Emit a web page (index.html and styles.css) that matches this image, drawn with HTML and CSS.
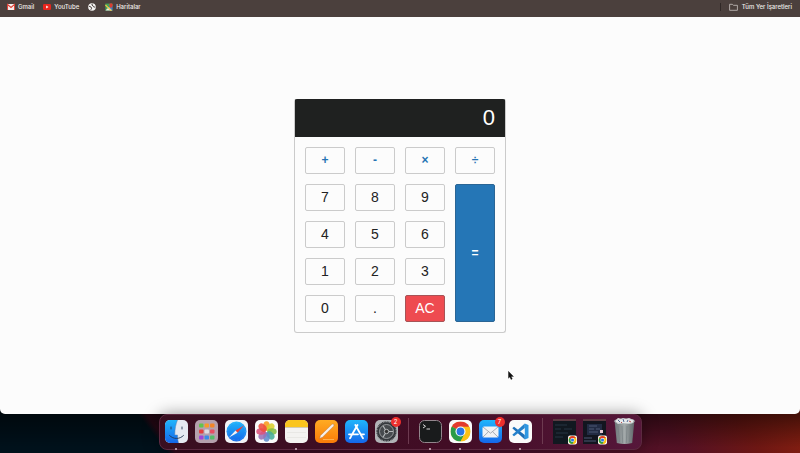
FILE: index.html
```html
<!DOCTYPE html>
<html lang="tr">
<head>
<meta charset="utf-8">
<title>Hesap Makinesi</title>
<link rel="stylesheet" href="styles.css">
</head>
<body>
<svg class="defs" aria-hidden="true">
  <defs>
    <linearGradient id="blue" x2="0" y2="1"><stop stop-color="#20b5fb"/><stop offset="1" stop-color="#1467ea"/></linearGradient>
    <linearGradient id="orange" x2="0" y2="1"><stop stop-color="#ffab23"/><stop offset="1" stop-color="#f97b08"/></linearGradient>
    <linearGradient id="metal"><stop stop-color="#6c7477"/><stop offset=".5" stop-color="#a3a9aa"/><stop offset="1" stop-color="#5e6568"/></linearGradient>
    <symbol id="chrome" viewBox="0 0 20 20">
      <circle cx="10" cy="10" r="10" fill="#fbc116"/>
      <path d="M10 10 1.34 5A10 10 0 0 1 18.66 5z" fill="#e33b2e"/>
      <path d="M10 10 1.34 5A10 10 0 0 0 10 20l4-7z" fill="#2a9c48"/>
      <path d="M10 5.3h8.8A10 10 0 0 1 10 20l4-7.500z" fill="#fbc116"/>
      <circle cx="10" cy="10" r="5" fill="#fff"/><circle cx="10" cy="10" r="3.900" fill="#2a78e4"/>
    </symbol>
  </defs>
</svg>
<nav class="bookmarks" aria-label="Yer işaretleri">
  <a href="#gmail"><svg class="fav" viewBox="0 0 8 8"><path d="M.5 1h7v6h-7z" fill="#f5eeee"/><path d="M.5 7V1.500L4 4.500l3.500-3V7" fill="none" stroke="#dc4439" stroke-width="1.100"/></svg>Gmail</a>
  <a href="#youtube"><svg class="fav" viewBox="0 0 8 8"><rect y="1" width="8" height="6" rx="1.300" fill="#e8251e"/><path d="m3.200 2.600 2.300 1.400-2.300 1.400z" fill="#fff"/></svg>YouTube</a>
  <a href="#web" aria-label="Web"><svg class="fav" viewBox="0 0 8 8"><circle cx="4" cy="4" r="3.800" fill="#f4f2f1"/><path d="M1 3.200 3 4l.6 1.200-.8 1.600M4.500.8 3.800 2l1.300.8.4 1 1.600.4" fill="none" stroke="#4b4340" stroke-width="1"/></svg></a>
  <a href="#maps"><svg class="fav" viewBox="0 0 8 8"><path d="M.4.600h7v7h-7z" fill="#42a45b"/><path d="M.4 7.600 4 4l3.500 3.600z" fill="#e8e6df"/><path d="m4 4 3.400-2v5.600z" fill="#3f7ddb"/><path d="m.4 2 5.800 5.600" stroke="#f0c443" stroke-width="1.200"/><circle cx="6" cy="2" r="1.800" fill="#db3e32"/><path d="m4.600 3 1.400 2.500L7.400 3z" fill="#db3e32"/></svg>Haritalar</a>
  <a class="all" href="#all"><svg class="folder" viewBox="0 0 9 8"><path d="M.6 1.300h2.800l1 1h4v5H.6z" fill="none" stroke="#c9c3c0" stroke-width=".8"/></svg>Tüm Yer İşaretleri</a>
</nav>

<main class="page">
  <section class="calculator" aria-label="Hesap makinesi">
    <input class="screen" type="text" value="0" aria-label="Sonuç" readonly>
    <div class="keys">
      <button class="op">+</button><button class="op">-</button><button class="op">×</button><button class="op">÷</button>
      <button>7</button><button>8</button><button>9</button><button class="equals">=</button>
      <button>4</button><button>5</button><button>6</button>
      <button>1</button><button>2</button><button>3</button>
      <button>0</button><button>.</button><button class="clear">AC</button>
    </div>
  </section>
  <svg class="cursor" viewBox="0 0 6 9"><path d="M.4.300v7l1.500-1.400 1.100 2.600 1.300-.6L3.200 5.500h2.300z" fill="#111" stroke="#111" stroke-width=".3"/></svg>
</main>

<footer class="desktop">
  <div class="dock">
    <span class="app open"><svg viewBox="0 0 23 23"><rect width="23" height="23" rx="5" fill="#e5eaf1"/><path d="M12.500 0H5a5 5 0 0 0-5 5v13a5 5 0 0 0 5 5h8.500c-.7-2.700-.9-5-1-8h-2.700c0-6 1-11 2.700-15z" fill="url(#blue)"/><path d="M12.500 0c-1.700 4-2.700 9-2.700 15h2.700c.1 3 .3 5.300 1 8" fill="none" stroke="#5a7fae" stroke-width=".5"/><path d="M4.500 15.500c4 4 10 4 14 0M6 7v2M17 7v2" fill="none" stroke="#243851" stroke-width=".9" stroke-linecap="round"/></svg></span>
    <span class="app"><svg viewBox="0 0 23 23"><rect width="23" height="23" rx="5" fill="#b5a0ad"/><g><rect x="4" y="3.500" width="4.500" height="4" rx="1" fill="#62c34c"/><rect x="9.500" y="3.500" width="4.500" height="4" rx="1" fill="#f79b28"/><rect x="15" y="3.500" width="4.500" height="4" rx="1" fill="#f28428"/><rect x="4" y="9.500" width="4.500" height="4" rx="1" fill="#e33f3f"/><rect x="9.500" y="9.500" width="4.500" height="4" rx="1" fill="#dedbe0"/><rect x="15" y="9.500" width="4.500" height="4" rx="1" fill="#e84d62"/><rect x="4" y="15.500" width="4.500" height="4" rx="1" fill="#a045d9"/><rect x="9.500" y="15.500" width="4.500" height="4" rx="1" fill="#3a8be8"/><rect x="15" y="15.500" width="4.500" height="4" rx="1" fill="#55bd68"/></g></svg></span>
    <span class="app"><svg viewBox="0 0 23 23"><rect width="23" height="23" rx="5" fill="#f2f3f6"/><circle cx="11.500" cy="11.500" r="10" fill="url(#blue)"/><circle cx="11.500" cy="11.500" r="8.800" fill="none" stroke="#8fcaf6" stroke-width=".5" stroke-dasharray=".4 1"/><path d="m19 5.500-6.500 7.200-2-2.200z" fill="#ed3f35"/><path d="m4 17.500 6.500-7 2 2.200z" fill="#f2f2f5"/></svg></span>
    <span class="app"><svg viewBox="0 0 23 23"><rect width="23" height="23" rx="5" fill="#fafafa"/><g transform="translate(11.500 11.500)" fill-opacity=".88"><ellipse cy="-5.500" rx="3.300" ry="4.700" fill="#f89a1c"/><ellipse cy="-5.500" rx="3.300" ry="4.700" fill="#d8cf2e" transform="rotate(45)"/><ellipse cy="-5.500" rx="3.300" ry="4.700" fill="#83bd45" transform="rotate(90)"/><ellipse cy="-5.500" rx="3.300" ry="4.700" fill="#45ac98" transform="rotate(135)"/><ellipse cy="-5.500" rx="3.300" ry="4.700" fill="#5f8ccc" transform="rotate(180)"/><ellipse cy="-5.500" rx="3.300" ry="4.700" fill="#9a72b7" transform="rotate(225)"/><ellipse cy="-5.500" rx="3.300" ry="4.700" fill="#dd527b" transform="rotate(270)"/><ellipse cy="-5.500" rx="3.300" ry="4.700" fill="#ee4c3d" transform="rotate(315)"/></g></svg></span>
    <span class="app open"><svg viewBox="0 0 23 23"><rect width="23" height="23" rx="5" fill="#f4f3f1"/><path d="M0 7V5a5 5 0 0 1 5-5h13a5 5 0 0 1 5 5v2z" fill="#fac51e"/><path d="M0 7.500h23" stroke="#c4b993" stroke-width=".7"/><path d="M2 12.500h19M2 17.500h19" stroke="#dedcd9" stroke-width=".5"/></svg></span>
    <span class="app"><svg viewBox="0 0 23 23"><rect width="23" height="23" rx="5" fill="url(#orange)"/><path d="m4.500 18.500 1-3L17 4.300c1.400-.7 2.500.3 1.800 1.700L7.500 17.200z" fill="#f7f1ec" stroke="#a36a42" stroke-width=".4"/><path d="M8 19.500h11" stroke="#ffc46b" stroke-width=".7"/></svg></span>
    <span class="app"><svg viewBox="0 0 23 23"><rect width="23" height="23" rx="5" fill="url(#blue)"/><path d="m12.500 5-6.300 11M10.300 5l6.300 11M4 14.300h9M16 14.300h3M5.800 17l-.8 1.300M17.200 17l.8 1.300" fill="none" stroke="#fff" stroke-width="1.800" stroke-linecap="round"/></svg></span>
    <span class="app"><svg viewBox="0 0 23 23"><rect width="23" height="23" rx="5" fill="#b1b3b7"/><circle cx="11.500" cy="11.500" r="9.300" fill="#35393d"/><circle cx="11.500" cy="11.500" r="9.500" fill="none" stroke="#292c30" stroke-width="1.200" stroke-dasharray="1 .6"/><circle cx="11.500" cy="11.500" r="7" fill="#464a4e" stroke="#a0a3a5" stroke-width=".9"/><path d="M13 11.500h5M10.700 10.200 8 5.700M10.700 12.800 8 17.300" stroke="#b5b8ba" stroke-width="1.200"/><circle cx="11.500" cy="11.500" r="2.200" fill="#333" stroke="#b5b8ba"/></svg><b class="badge">2</b></span>
    <i class="divider"></i>
    <span class="app open"><svg viewBox="0 0 23 23"><rect x=".5" y=".5" width="22" height="22" rx="5" fill="#191b1c" stroke="#93868d"/><path d="m4 4.500 2.500 1.800L4 8M7.500 9H11" fill="none" stroke="#eee" stroke-width=".9"/></svg></span>
    <span class="app open"><svg viewBox="0 0 23 23"><rect width="23" height="23" rx="5" fill="#fafafa"/><use href="#chrome" x="1.500" y="1.500" width="20" height="20"/></svg></span>
    <span class="app open"><svg viewBox="0 0 23 23"><rect width="23" height="23" rx="5" fill="url(#blue)"/><rect x="3.500" y="6.500" width="16" height="11" rx="1.500" fill="#f1f2f4"/><path d="m4 7 7.500 6.200L19 7M4 17l5.500-5.300M19 17l-5.500-5.300" fill="none" stroke="#969ba3" stroke-width=".8"/></svg><b class="badge">7</b></span>
    <span class="app open"><svg viewBox="0 0 23 23"><rect width="23" height="23" rx="5" fill="#fafafa"/><path d="m3.300 8.300 1.700-1.500L15.800 15v4.500z" fill="#1d6fb8"/><path d="M3.300 14.700 15.800 3.500V8L5 16.200z" fill="#2481cc"/><path d="M15.800 3.500 19.500 5v13l-3.700 1.500z" fill="#2f97e2"/></svg></span>
    <i class="divider"></i>
    <span class="app"><svg viewBox="0 0 23 23"><path d="M0-1h23v25H0z" fill="#111820"/><path d="M0 0h23" stroke="#5c3b42" stroke-width="2"/><path d="M2 5h12M2 9h6m3 0h8M3 13h12M2 17h8" stroke="#263542" stroke-width="1"/><rect x="15" y="15.500" width="9" height="9" rx="2" fill="#fff"/><use href="#chrome" x="15.500" y="16" width="8" height="8"/></svg></span>
    <span class="app"><svg viewBox="0 0 23 23"><path d="M0-1h23v25H0z" fill="#12151f"/><path d="M0 0h23" stroke="#5c3b42" stroke-width="2"/><path d="M4 4h15v11H4z" fill="#222b43"/><path d="M6 6h8M6 9h5m2 0h4M6 12h9M1 18h8M1 21h12" stroke="#4c5874" stroke-width="1"/><path d="M17 10h3v3h-3z" fill="#e4c6d2"/><rect x="15" y="15.500" width="9" height="9" rx="2" fill="#fff"/><use href="#chrome" x="15.500" y="16" width="8" height="8"/></svg></span>
    <span class="app"><svg viewBox="0 0 23 23"><path d="m1.500 0 2.300 23q7.700 2 15.400 0l2.300-23z" fill="url(#metal)"/><path d="m2 1 3-3 3 1 2-1 3 1 3-1 2 1 3 1-1 3-5 1-5-1-5 1z" fill="#e8eaeb"/><path d="m5 0 2 2M10-1l1 3M15 0l-1 2" stroke="#526c98" stroke-width="1"/><path d="m16 1 2 1M8 2l1 1" stroke="#b95050" stroke-width="1"/><ellipse cx="11.500" cy="1.200" rx="10" ry="2.500" fill="none" stroke="#b9bfc0" stroke-width=".7"/><path d="m5 6 1.500 16M9 6l.7 17M14 6l-.7 17M18 6l-1.500 16" stroke="#727b7d" stroke-width=".6"/></svg></span>
  </div>
</footer>
</body>
</html>
```
FILE: styles.css
```css
* {
  box-sizing: border-box;
}

body {
  margin: 0;
  min-height: 100vh;
  display: flex;
  flex-direction: column;
  font-family: "Liberation Sans", Arial, sans-serif;
  background-color: #4b403d;
  background-image:
    linear-gradient(to bottom, rgba(0, 0, 0, 0.5) 12px, transparent 45px),
    linear-gradient(52deg, #00111b 20%, #320a1b 21%, #45102a 60%, #541124 82%, #6e1713 91%, #8f2210);
  background-size: 100% 50px;
  background-position: 0 100%;
  background-repeat: no-repeat;
}

.defs {
  position: absolute;
  width: 0;
  height: 0;
}

.bookmarks {
  display: flex;
  align-items: center;
  gap: 9px;
  height: 17px;
  padding: 0 8px 4px 7px;
  background: #4b403d;
  font: 500 6px/12px Inter, sans-serif;
}

.bookmarks a {
  display: flex;
  align-items: center;
  gap: 3px;
  color: #f1eeec;
  text-decoration: none;
}

.fav {
  width: 8px;
  height: 8px;
}

.folder {
  width: 9px;
  height: 8px;
}

.bookmarks .all {
  gap: 4px;
  margin-left: auto;
  padding-left: 8px;
  border-left: 1px solid #302826;
  line-height: 8px;
}

.page {
  position: relative;
  z-index: 0;
  flex: 1;
  display: flex;
  align-items: center;
  justify-content: center;
  background: #fcfcfc;
  border-radius: 0 0 5px 5px;
}

.calculator {
  width: 212px;
  border: 1px solid #cbcbcb;
  border-top-color: #1f2120;
  border-radius: 3px;
}

.screen {
  display: block;
  width: 100%;
  height: 37px;
  padding: 0 10px;
  border: 0;
  background: #1f2120;
  color: #fff;
  font: 22px "Liberation Sans", Arial, sans-serif;
  text-align: right;
}

.keys {
  display: grid;
  grid-template-columns: repeat(4, 1fr);
  grid-auto-rows: 27px;
  gap: 10px;
  padding: 10px;
}

.keys button {
  padding: 0;
  border: 1px solid #cbcbcb;
  border-radius: 2px;
  background: #fcfcfc;
  color: #222;
  font: 14px "Liberation Sans", Arial, sans-serif;
}

.keys .op {
  color: #2574b4;
  font-size: 12px;
  font-weight: bold;
}

.keys .equals {
  grid-area: 2 / 4 / span 4;
  background: #2576b6;
  border-color: #2a6595;
  color: #fff;
  font-size: 12px;
  font-weight: bold;
}

.keys .clear {
  background: #ee4b50;
  border-color: #a75356;
  color: #fff;
}

.cursor {
  position: absolute;
  left: 508px;
  top: 354px;
  width: 6px;
  height: 9px;
}

.desktop {
  position: relative;
  z-index: 1;
  display: flex;
  justify-content: center;
  height: 39px;
  padding-bottom: 3px;
}

.dock {
  display: flex;
  align-items: center;
  gap: 7px;
  padding: 0 5px 2px;
  border: 1px solid #5c2940;
  border-radius: 8px;
  background: linear-gradient(90deg, #390f20, #420d25 60%, #56173a);
  box-shadow: 0 0 16px rgba(0, 0, 0, 0.4);
}

.app {
  position: relative;
  width: 23px;
  height: 23px;
}

.app svg {
  display: block;
  width: 23px;
  height: 23px;
  overflow: visible;
}

.open::after {
  content: "";
  position: absolute;
  left: 10px;
  bottom: -7px;
  width: 2px;
  height: 2px;
  border-radius: 50%;
  background: #d5b9c4;
}

.badge {
  position: absolute;
  top: -3px;
  right: -3px;
  width: 10px;
  height: 10px;
  border-radius: 50%;
  background: #ee2f2d;
  color: #fff;
  font: 6px/10px Inter, sans-serif;
  text-align: center;
}

.divider {
  width: 1px;
  height: 26px;
  margin: 0 3px;
  background: #6d3a50;
}
```
